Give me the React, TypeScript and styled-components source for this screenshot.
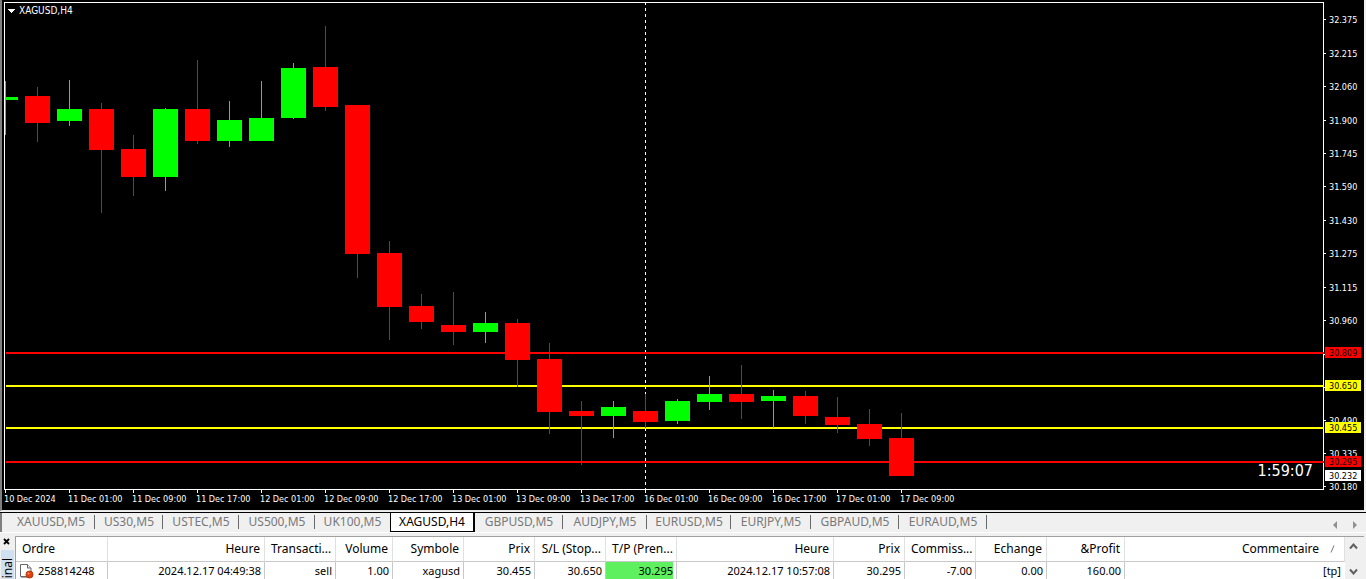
import React from 'react';
import styled, { createGlobalStyle, css } from 'styled-components';

const GlobalStyle = createGlobalStyle`
  * { box-sizing: border-box; }
  body { margin: 0; background: #f0f0f0; }
`;

const chartFont = css`
  font-family: 'DejaVu Sans Condensed', 'DejaVu Sans', sans-serif;
  font-size: 9px;
`;

const uiFont = css`
  font-family: 'Noto Sans', 'Open Sans', sans-serif;
`;

/* ---------- data ---------- */

const BULL = '#00ff00';
const BEAR = '#ff0000';
const STEP = 32;
const BODY = 25;

// high, low, body top, body bottom (plot rows), rising
const candles: [number, number, number, number, boolean][] = [
  [78, 132, 94, 97, true],
  [84, 139, 93, 120, false],
  [77, 123, 106, 118, true],
  [100, 210, 106, 147, false],
  [132, 193, 146, 174, false],
  [105, 188, 106, 174, true],
  [57, 141, 106, 138, false],
  [98, 144, 117, 138, true],
  [78, 138, 115, 138, true],
  [60, 116, 65, 115, true],
  [23, 108, 64, 104, false],
  [102, 275, 102, 251, false],
  [238, 337, 250, 304, false],
  [291, 326, 303, 319, false],
  [289, 342, 322, 329, false],
  [309, 340, 320, 329, true],
  [316, 384, 320, 357, false],
  [340, 431, 356, 409, false],
  [398, 462, 408, 413, false],
  [398, 435, 404, 413, true],
  [391, 425, 408, 419, false],
  [396, 421, 398, 418, true],
  [373, 407, 391, 399, true],
  [362, 416, 391, 399, false],
  [387, 425, 393, 398, true],
  [388, 421, 393, 413, false],
  [394, 430, 414, 422, false],
  [406, 443, 421, 436, false],
  [410, 473, 435, 473, false],
];

const levels = [
  { y: 349, color: '#ff0000', price: '30.809' },
  { y: 382, color: '#ffff00', price: '30.650' },
  { y: 424, color: '#ffff00', price: '30.455' },
  { y: 458, color: '#ff0000', price: '30.295' },
];

// the marks at 30.805 and 30.650 lie wholly under a level's tag
const scale: [number, string][] = [
  [16, '32.375'], [50, '32.215'], [83, '32.060'], [117, '31.900'],
  [150, '31.745'], [183, '31.590'], [217, '31.430'], [250, '31.275'],
  [284, '31.115'], [317, '30.960'], [351, ''], [384, ''],
  [417, '30.490'], [450, '30.335'], [483, '30.180'],
];

const times = [
  '10 Dec 2024', '11 Dec 01:00', '11 Dec 09:00', '11 Dec 17:00', '12 Dec 01:00',
  '12 Dec 09:00', '12 Dec 17:00', '13 Dec 01:00', '13 Dec 09:00', '13 Dec 17:00',
  '16 Dec 01:00', '16 Dec 09:00', '16 Dec 17:00', '17 Dec 01:00', '17 Dec 09:00',
];

const tabs: [string, number][] = [
  ['XAUUSD,M5', 88], ['US30,M5', 68], ['USTEC,M5', 76], ['US500,M5', 76],
  ['UK100,M5', 75], ['XAGUSD,H4', 85], ['GBPUSD,M5', 88], ['AUDJPY,M5', 84],
  ['EURUSD,M5', 84], ['EURJPY,M5', 80], ['GBPAUD,M5', 88], ['EURAUD,M5', 88],
];

const columns: { head: string; value: string; width?: number }[] = [
  { head: 'Ordre', value: '258814248', width: 92 },
  { head: 'Heure', value: '2024.12.17 04:49:38', width: 157 },
  { head: 'Transacti...', value: 'sell', width: 71 },
  { head: 'Volume', value: '1.00', width: 57 },
  { head: 'Symbole', value: 'xagusd', width: 71 },
  { head: 'Prix', value: '30.455', width: 71 },
  { head: 'S/L (Stop...', value: '30.650', width: 71 },
  { head: 'T/P (Pren...', value: '30.295', width: 71 },
  { head: 'Heure', value: '2024.12.17 10:57:08', width: 157 },
  { head: 'Prix', value: '30.295', width: 71 },
  { head: 'Commiss...', value: '-7.00', width: 71 },
  { head: 'Echange', value: '0.00', width: 71 },
  { head: '&Profit', value: '160.00', width: 78 },
  { head: 'Commentaire', value: '[tp]' },
];

/* ---------- layout ---------- */

const Page = styled.div`
  display: flex;
  flex-direction: column;
  height: 100vh;
  overflow: hidden;
  ${uiFont}
`;

const ChartWindow = styled.main`
  flex: 1;
  min-height: 0;
  display: flex;
  flex-direction: column;
  padding: 2px 0 0 2px;
  margin-right: 2px;
  background: #000;
  border-left: 2px solid #808080;
  border-bottom: 1px solid #e3e3e3;
`;

const ChartArea = styled.div`
  flex: 1;
  min-height: 0;
  display: flex;
`;

const Plot = styled.section`
  position: relative;
  flex: 1;
  min-width: 0;
  border: 1px solid #fff;
  border-right: 0;
`;

const PlotSvg = styled.svg`
  display: block;
  width: 100%;
  height: 100%;
`;

const ChartText = styled.text`
  ${chartFont}
`;

const ChartTitle = styled(ChartText)`
  font-size: 10px;
`;

const Countdown = styled.div`
  position: absolute;
  right: 10px;
  bottom: 8px;
  color: #fff;
  font-family: 'DejaVu Sans Condensed', 'DejaVu Sans', sans-serif;
  font-size: 16px;
  line-height: 20px;
`;

const PriceAxis = styled.svg`
  display: block;
  width: 41px;
  height: 100%;
  overflow: visible;
`;

const TimeAxis = styled.div`
  display: flex;
  height: 20px;
  overflow: hidden;
  color: #fff;
  ${chartFont}
  line-height: 12px;
`;

const TimeLabel = styled.div`
  flex: 0 0 64px;
  white-space: nowrap;
  &::before {
    content: '';
    display: block;
    width: 1px;
    height: 3px;
    margin-left: 1px;
    background: #fff;
  }
`;

/* ---------- tabs ---------- */

const TabBar = styled.nav`
  display: flex;
  justify-content: space-between;
  height: 21px;
  flex: none;
  margin-top: 1px;
  border-top: 1px solid #000;
  border-bottom: 1px solid #fff;
`;

const TabList = styled.div`
  display: flex;
  align-items: flex-start;
  padding-left: 5px;
  border-left: 2px solid #808080;
`;

const Tab = styled.button<{ $width: number; $active: boolean; $divided: boolean }>`
  position: relative;
  width: ${(p) => p.$width}px;
  height: 19px;
  padding: 0 0 2px;
  border: 0;
  background: none;
  color: #787878;
  ${uiFont}
  font-size: 12px;
  line-height: 16px;
  white-space: nowrap;
  ${(p) =>
    p.$divided &&
    css`
      &::after {
        content: '';
        position: absolute;
        right: 0;
        top: 2px;
        width: 1px;
        height: 14px;
        background: #696969;
      }
    `}
  ${(p) =>
    p.$active &&
    css`
      padding-bottom: 1px;
      color: #000;
      background: #fff;
      border: 1px solid #000;
      border-right-width: 2px;
      border-top: 0;
    `}
`;

const TabScroll = styled.div`
  display: flex;
  gap: 12px;
  padding: 4px 8px 0 0;
`;

const IconButton = styled.button`
  display: block;
  padding: 0;
  border: 0;
  background: none;
  line-height: 0;
`;

/* ---------- terminal ---------- */

const Terminal = styled.section`
  display: flex;
  flex: none;
  height: 46px;
  padding: 3px 2px 0 0;
  overflow: hidden;
`;

const TerminalSide = styled.aside`
  display: flex;
  flex-direction: column;
  align-items: flex-start;
  width: 15px;
  padding: 2px 1px 0;
`;

const CloseButton = styled(IconButton)`
  padding: 0 0 5px 2px;
`;

const SideTitle = styled.div`
  align-self: stretch;
  padding-bottom: 8px;
  background: #cfe0f1;
  writing-mode: vertical-rl;
  transform: rotate(180deg);
  font-size: 12px;
  line-height: 13px;
  flex: none;
`;

const TableBox = styled.div`
  flex: 1;
  min-width: 0;
  background: #fff;
  border-top: 1px solid #a0a0a0;
  border-left: 1px solid #a0a0a0;
`;

const OrdersTable = styled.table`
  width: 100%;
  table-layout: fixed;
  border-collapse: separate;
  border-spacing: 0;
  color: #000;
`;

const HeadCell = styled.th<{ $left: boolean; $last: boolean }>`
  height: 25px;
  padding: 0 ${(p) => (p.$last ? 9 : 4)}px 0 6px;
  border-right: 1px solid #e0e0e0;
  border-bottom: 1px solid #c8c8c8;
  font-size: 12px;
  line-height: 16px;
  font-weight: 400;
  white-space: nowrap;
  text-align: ${(p) => (p.$left ? 'left' : 'right')};
`;

const SortMark = styled.svg`
  margin-left: 11px;
`;

const Cell = styled.td<{ $last: boolean }>`
  height: 18px;
  padding: 0 3px 0 0;
  border-right: 1px solid ${(p) => (p.$last ? '#fff' : '#c8c8c8')};
  font-size: 11px;
  line-height: 18px;
  white-space: nowrap;
  text-align: right;
`;

const Highlight = styled.span`
  display: block;
  background: #5ff05f;
`;

const OrderId = styled.span`
  display: flex;
  align-items: center;
  gap: 4px;
  padding-left: 3px;
`;

const ScrollBar = styled.div`
  display: flex;
  flex-direction: column;
  justify-content: space-between;
  align-items: center;
  width: 19px;
  padding: 6px 2px 4px 0;
  background: #f0f0f0;
  border-top: 1px solid #a0a0a0;
`;

const OrderIcon = () => (
  <svg width="15" height="16" viewBox="0 0 15 16" aria-hidden="true">
    <path d="M1.5 1.5h7l3.5 3.5v8.5H1.5z" fill="#fff" stroke="#666" />
    <path d="M8.5 1.5V5H12" fill="#eee" stroke="#666" />
    <path d="M2 14.5h8" stroke="#aaa" />
    <circle cx="10.5" cy="11.5" r="3.5" fill="#e2410e" stroke="#b93208" />
    <circle cx="9.5" cy="10.5" r="1" fill="#ff9a68" />
  </svg>
);

const PriceTag = ({ y, color, price }: { y: number; color: string; price: string }) => (
  <g>
    <rect x="2" y={y} width="36" height="11" fill={color} />
    <ChartText x="6" y={y + 9} fill="#000">{price}</ChartText>
  </g>
);

export default function App() {
  return (
    <Page>
      <GlobalStyle />
      <ChartWindow>
        <ChartArea>
          <Plot aria-label="XAGUSD,H4">
            <PlotSvg shapeRendering="crispEdges">
              <line x1="640.5" x2="640.5" y1="-1" y2="100%" stroke="#fff" strokeDasharray="3 3" />
              {levels.map((l) => (
                <rect key={l.price} x="1" y={l.y} width="100%" height="2" fill={l.color} />
              ))}
              {candles.map(([high, low, top, bottom, up], i) => (
                <g key={i} fill={up ? BULL : BEAR}>
                  <rect x={i * STEP} y={high} width="1" height={low - high} />
                  <rect x={i * STEP - 12} y={top} width={BODY} height={bottom - top} />
                </g>
              ))}
              <path d="M3 6h7l-3.500 4z" fill="#fff" />
              <ChartTitle x="14" y="11" fill="#fff">XAGUSD,H4</ChartTitle>
            </PlotSvg>
            <Countdown>1:59:07</Countdown>
          </Plot>
          <PriceAxis shapeRendering="crispEdges">
            <rect x="0" y="0" width="1" height="100%" fill="#fff" />
            {scale.map(([y, price]) => (
              <g key={y} fill="#fff">
                <rect x="1" y={y + 1} width="2" height="1" />
                {price && <ChartText x="6" y={y + 5}>{price}</ChartText>}
              </g>
            ))}
            {levels.map((l) => (
              <g key={l.price}>
                <rect x="0" y={l.y + 1} width="1" height="2" fill={l.color} />
                <PriceTag y={l.y - 4} color={l.color} price={l.price} />
              </g>
            ))}
            <PriceTag y={468} color="#fff" price="30.232" />
          </PriceAxis>
        </ChartArea>
        <TimeAxis>
          {times.map((t) => (
            <TimeLabel key={t}>{t}</TimeLabel>
          ))}
        </TimeAxis>
      </ChartWindow>

      <TabBar>
        <TabList>
          {tabs.map(([name, width], i) => (
            <Tab
              key={name}
              type="button"
              $width={width}
              $active={name === 'XAGUSD,H4'}
              $divided={i !== 4 && i !== 5}
            >
              {name}
            </Tab>
          ))}
        </TabList>
        <TabScroll>
          <IconButton type="button" aria-label="Précédent">
            <svg width="7" height="8" viewBox="0 0 7 8"><path d="M5 0v8L1 4z" fill="#909090" /></svg>
          </IconButton>
          <IconButton type="button" aria-label="Suivant">
            <svg width="7" height="8" viewBox="0 0 7 8"><path d="M2 0v8l4-4z" fill="#909090" /></svg>
          </IconButton>
        </TabScroll>
      </TabBar>

      <Terminal>
        <TerminalSide>
          <CloseButton type="button" aria-label="Fermer">
            <svg width="7" height="7" viewBox="0 0 7 7">
              <path d="M1 1l5 5M6 1L1 6" stroke="#000" strokeWidth="1.800" />
            </svg>
          </CloseButton>
          <SideTitle>Terminal</SideTitle>
        </TerminalSide>
        <TableBox>
          <OrdersTable>
            <colgroup>
              {columns.map((c, i) => (
                <col key={i} width={c.width} />
              ))}
            </colgroup>
            <thead>
              <tr>
                {columns.map((c, i) => (
                  <HeadCell key={i} scope="col" $left={i === 0} $last={i === 13}>
                    {c.head}
                    {i === 13 && (
                      <SortMark width="5" height="8" viewBox="0 0 5 8" aria-hidden="true">
                        <path d="M1 7.500L4 .5" stroke="#777" />
                      </SortMark>
                    )}
                  </HeadCell>
                ))}
              </tr>
            </thead>
            <tbody>
              <tr>
                {columns.map((c, i) => (
                  <Cell key={i} $last={i === 13}>
                    {i === 0 && (
                      <OrderId>
                        <OrderIcon />
                        {c.value}
                      </OrderId>
                    )}
                    {i === 7 && <Highlight>{c.value}</Highlight>}
                    {i !== 0 && i !== 7 && c.value}
                  </Cell>
                ))}
              </tr>
            </tbody>
          </OrdersTable>
        </TableBox>
        <ScrollBar>
          <IconButton type="button" aria-label="Défiler vers le haut">
            <svg width="9" height="7" viewBox="0 0 9 7"><path d="M1 5.500l3.500-4 3.500 4" fill="none" stroke="#606060" strokeWidth="2" /></svg>
          </IconButton>
          <IconButton type="button" aria-label="Défiler vers le bas">
            <svg width="9" height="7" viewBox="0 0 9 7"><path d="M1 1.500l3.500 4 3.500-4" fill="none" stroke="#606060" strokeWidth="2" /></svg>
          </IconButton>
        </ScrollBar>
      </Terminal>
    </Page>
  );
}
